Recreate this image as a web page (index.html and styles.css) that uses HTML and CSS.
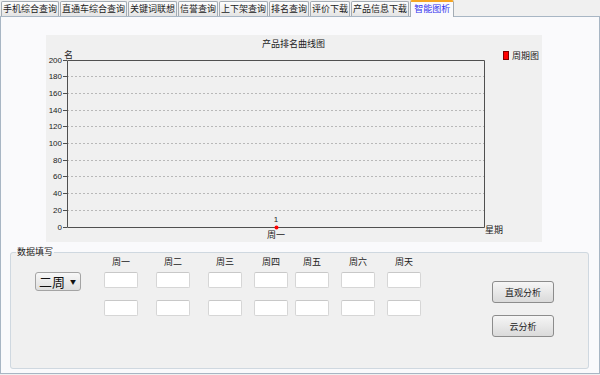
FILE: index.html
```html
<!DOCTYPE html>
<html lang="zh-CN">
<head>
    <meta charset="UTF-8">
    <title>智能图析</title>
    <link rel="stylesheet" href="styles.css">
</head>
<body>
    <div class="tabs">
        <span class="tab">手机综合查询</span>
        <span class="tab">直通车综合查询</span>
        <span class="tab">关键词联想</span>
        <span class="tab">信誉查询</span>
        <span class="tab">上下架查询</span>
        <span class="tab">排名查询</span>
        <span class="tab">评价下载</span>
        <span class="tab">产品信息下载</span>
        <span class="tab active">智能图析</span>
    </div>

    <div class="panel">
        <div class="chart">
            <svg width="496" height="207" viewBox="0 0 496 207">
                <text class="chart-title" x="247.5" y="12" text-anchor="middle">产品排名曲线图</text>

                <!-- legend -->
                <rect x="457.5" y="16.5" width="5" height="8" fill="#ff0000" stroke="#800000"/>
                <text class="chart-text" x="466" y="24">周期图</text>

                <!-- grid -->
                <g stroke="#b8b8b8" stroke-dasharray="2 2">
                    <line x1="21" y1="41.5" x2="438" y2="41.5"/>
                    <line x1="21" y1="58.5" x2="438" y2="58.5"/>
                    <line x1="21" y1="75.5" x2="438" y2="75.5"/>
                    <line x1="21" y1="91.5" x2="438" y2="91.5"/>
                    <line x1="21" y1="108.5" x2="438" y2="108.5"/>
                    <line x1="21" y1="125.5" x2="438" y2="125.5"/>
                    <line x1="21" y1="141.5" x2="438" y2="141.5"/>
                    <line x1="21" y1="158.5" x2="438" y2="158.5"/>
                    <line x1="21" y1="175.5" x2="438" y2="175.5"/>
                </g>

                <!-- ticks -->
                <g stroke="#505050">
                    <line x1="17" y1="25.5" x2="21" y2="25.5"/>
                    <line x1="17" y1="41.5" x2="21" y2="41.5"/>
                    <line x1="17" y1="58.5" x2="21" y2="58.5"/>
                    <line x1="17" y1="75.5" x2="21" y2="75.5"/>
                    <line x1="17" y1="91.5" x2="21" y2="91.5"/>
                    <line x1="17" y1="108.5" x2="21" y2="108.5"/>
                    <line x1="17" y1="125.5" x2="21" y2="125.5"/>
                    <line x1="17" y1="141.5" x2="21" y2="141.5"/>
                    <line x1="17" y1="158.5" x2="21" y2="158.5"/>
                    <line x1="17" y1="175.5" x2="21" y2="175.5"/>
                    <line x1="17" y1="192.5" x2="21" y2="192.5"/>
                </g>

                <!-- frame -->
                <path d="M21.5 25.5 H438.5 V192.5 H21.5 Z" fill="none" stroke="#505050"/>

                <g class="axis-num" text-anchor="end">
                    <text x="16" y="28">200</text>
                    <text x="16" y="44">180</text>
                    <text x="16" y="61">160</text>
                    <text x="16" y="78">140</text>
                    <text x="16" y="94">120</text>
                    <text x="16" y="111">100</text>
                    <text x="16" y="128">80</text>
                    <text x="16" y="144">60</text>
                    <text x="16" y="161">40</text>
                    <text x="16" y="178">20</text>
                    <text x="16" y="195">0</text>
                </g>

                <text class="chart-text" x="18" y="23">名</text>
                <text class="chart-text" x="439" y="198">星期</text>

                <!-- data -->
                <text class="axis-num" x="230" y="187" text-anchor="middle">1</text>
                <circle cx="230.5" cy="192.5" r="2" fill="#ff0000"/>
                <text class="chart-text" x="230" y="203" text-anchor="middle">周一</text>
            </svg>
        </div>

        <fieldset class="group">
            <legend>数据填写</legend>
            <div class="group-body">
                <div class="week-select">
                    <span>二周</span>
                    <span class="arrow">▼</span>
                </div>

                <div class="days">
                    <div class="day"><span>周一</span><input type="text"><input type="text"></div>
                    <div class="day"><span>周二</span><input type="text"><input type="text"></div>
                    <div class="day"><span>周三</span><input type="text"><input type="text"></div>
                    <div class="day"><span>周四</span><input type="text"><input type="text"></div>
                    <div class="day"><span>周五</span><input type="text"><input type="text"></div>
                    <div class="day"><span>周六</span><input type="text"><input type="text"></div>
                    <div class="day"><span>周天</span><input type="text"><input type="text"></div>
                </div>

                <div class="actions">
                    <button>直观分析</button>
                    <button>云分析</button>
                </div>
            </div>
        </fieldset>
    </div>
</body>
</html>
```

FILE: styles.css
```css
body {
    margin: 0;
    background: #f0f0f0;
    font-family: "Noto Sans CJK SC", "Liberation Sans", sans-serif;
    font-size: 9px;
    color: #222;
}

/* tab strip */
.tabs {
    display: flex;
    align-items: flex-end;
    gap: 1px;
    height: 16px;
    padding-left: 1px;
}

.tab {
    box-sizing: border-box;
    height: 15px;
    padding: 0 1px;
    border: 1px solid #a4acb4;
    border-bottom: none;
    border-radius: 2px 2px 0 0;
    background: linear-gradient(#fefefe, #e4e4e4);
    line-height: 14px;
    white-space: nowrap;
}

.tab.active {
    position: relative;
    z-index: 1;
    height: 17px;
    margin-bottom: -1px;
    padding: 0 3px;
    border-top: 2px solid #f5a623;
    background: #fafafc;
    color: #3333ee;
    line-height: 13px;
}

/* main panel */
.panel {
    box-sizing: border-box;
    height: 358px;
    border: 1px solid #a8b6c4;
    background: #fafafc;
}

.chart {
    width: 496px;
    height: 207px;
    margin: 18px 0 0 45px;
    background: #f0f0f0;
}

.chart svg {
    display: block;
}

.chart-title,
.chart-text {
    font-family: "Noto Sans CJK SC", sans-serif;
    font-size: 9px;
    fill: #222;
}

.axis-num {
    font-family: "Liberation Sans", sans-serif;
    font-size: 8px;
    fill: #222;
}

/* data group */
.group {
    box-sizing: border-box;
    height: 122px;
    margin: 5px 10px 0 9px;
    padding: 0;
    border: 1px solid #cfd8e0;
    border-radius: 3px;
    background: #f0f0f0;
}

.group legend {
    margin-left: 5px;
    padding: 0 1px;
    font-size: 9px;
    line-height: 10px;
}

.group-body {
    display: flex;
    padding: 0 34px 0 24px;
}

.week-select {
    box-sizing: border-box;
    display: flex;
    align-items: center;
    justify-content: space-between;
    width: 46px;
    height: 19px;
    margin-top: 15px;
    padding: 0 4px 0 3px;
    border: 1px solid #a4a4a4;
    border-radius: 3px;
    background: linear-gradient(#f8f8f8, #dedede);
    font-size: 13px;
    line-height: 17px;
    color: #111;
}

.week-select .arrow {
    font-size: 6px;
}

.days {
    display: grid;
    grid-template-columns: 52px 52px 46px 41px 46px 46px 34px;
    margin-left: 23px;
}

.day {
    display: flex;
    flex-direction: column;
    width: 34px;
}

.day span {
    height: 10px;
    margin-bottom: 5px;
    line-height: 10px;
    text-align: center;
}

.day input {
    box-sizing: border-box;
    width: 34px;
    height: 16px;
    margin: 0 0 12px;
    padding: 0;
    border: 1px solid #d6d6d6;
    border-top-color: #c8c8c8;
    border-radius: 2px;
    background: #fff;
}

.actions {
    display: flex;
    flex-direction: column;
    gap: 12px;
    margin: 24px 0 0 auto;
}

button {
    box-sizing: border-box;
    width: 62px;
    height: 22px;
    padding: 0;
    border: 1px solid #8c8c8c;
    border-radius: 3px;
    background: linear-gradient(#f6f6f6, #dadada);
    font-family: "Noto Sans CJK SC", sans-serif;
    font-size: 9px;
    color: #222;
}
```
